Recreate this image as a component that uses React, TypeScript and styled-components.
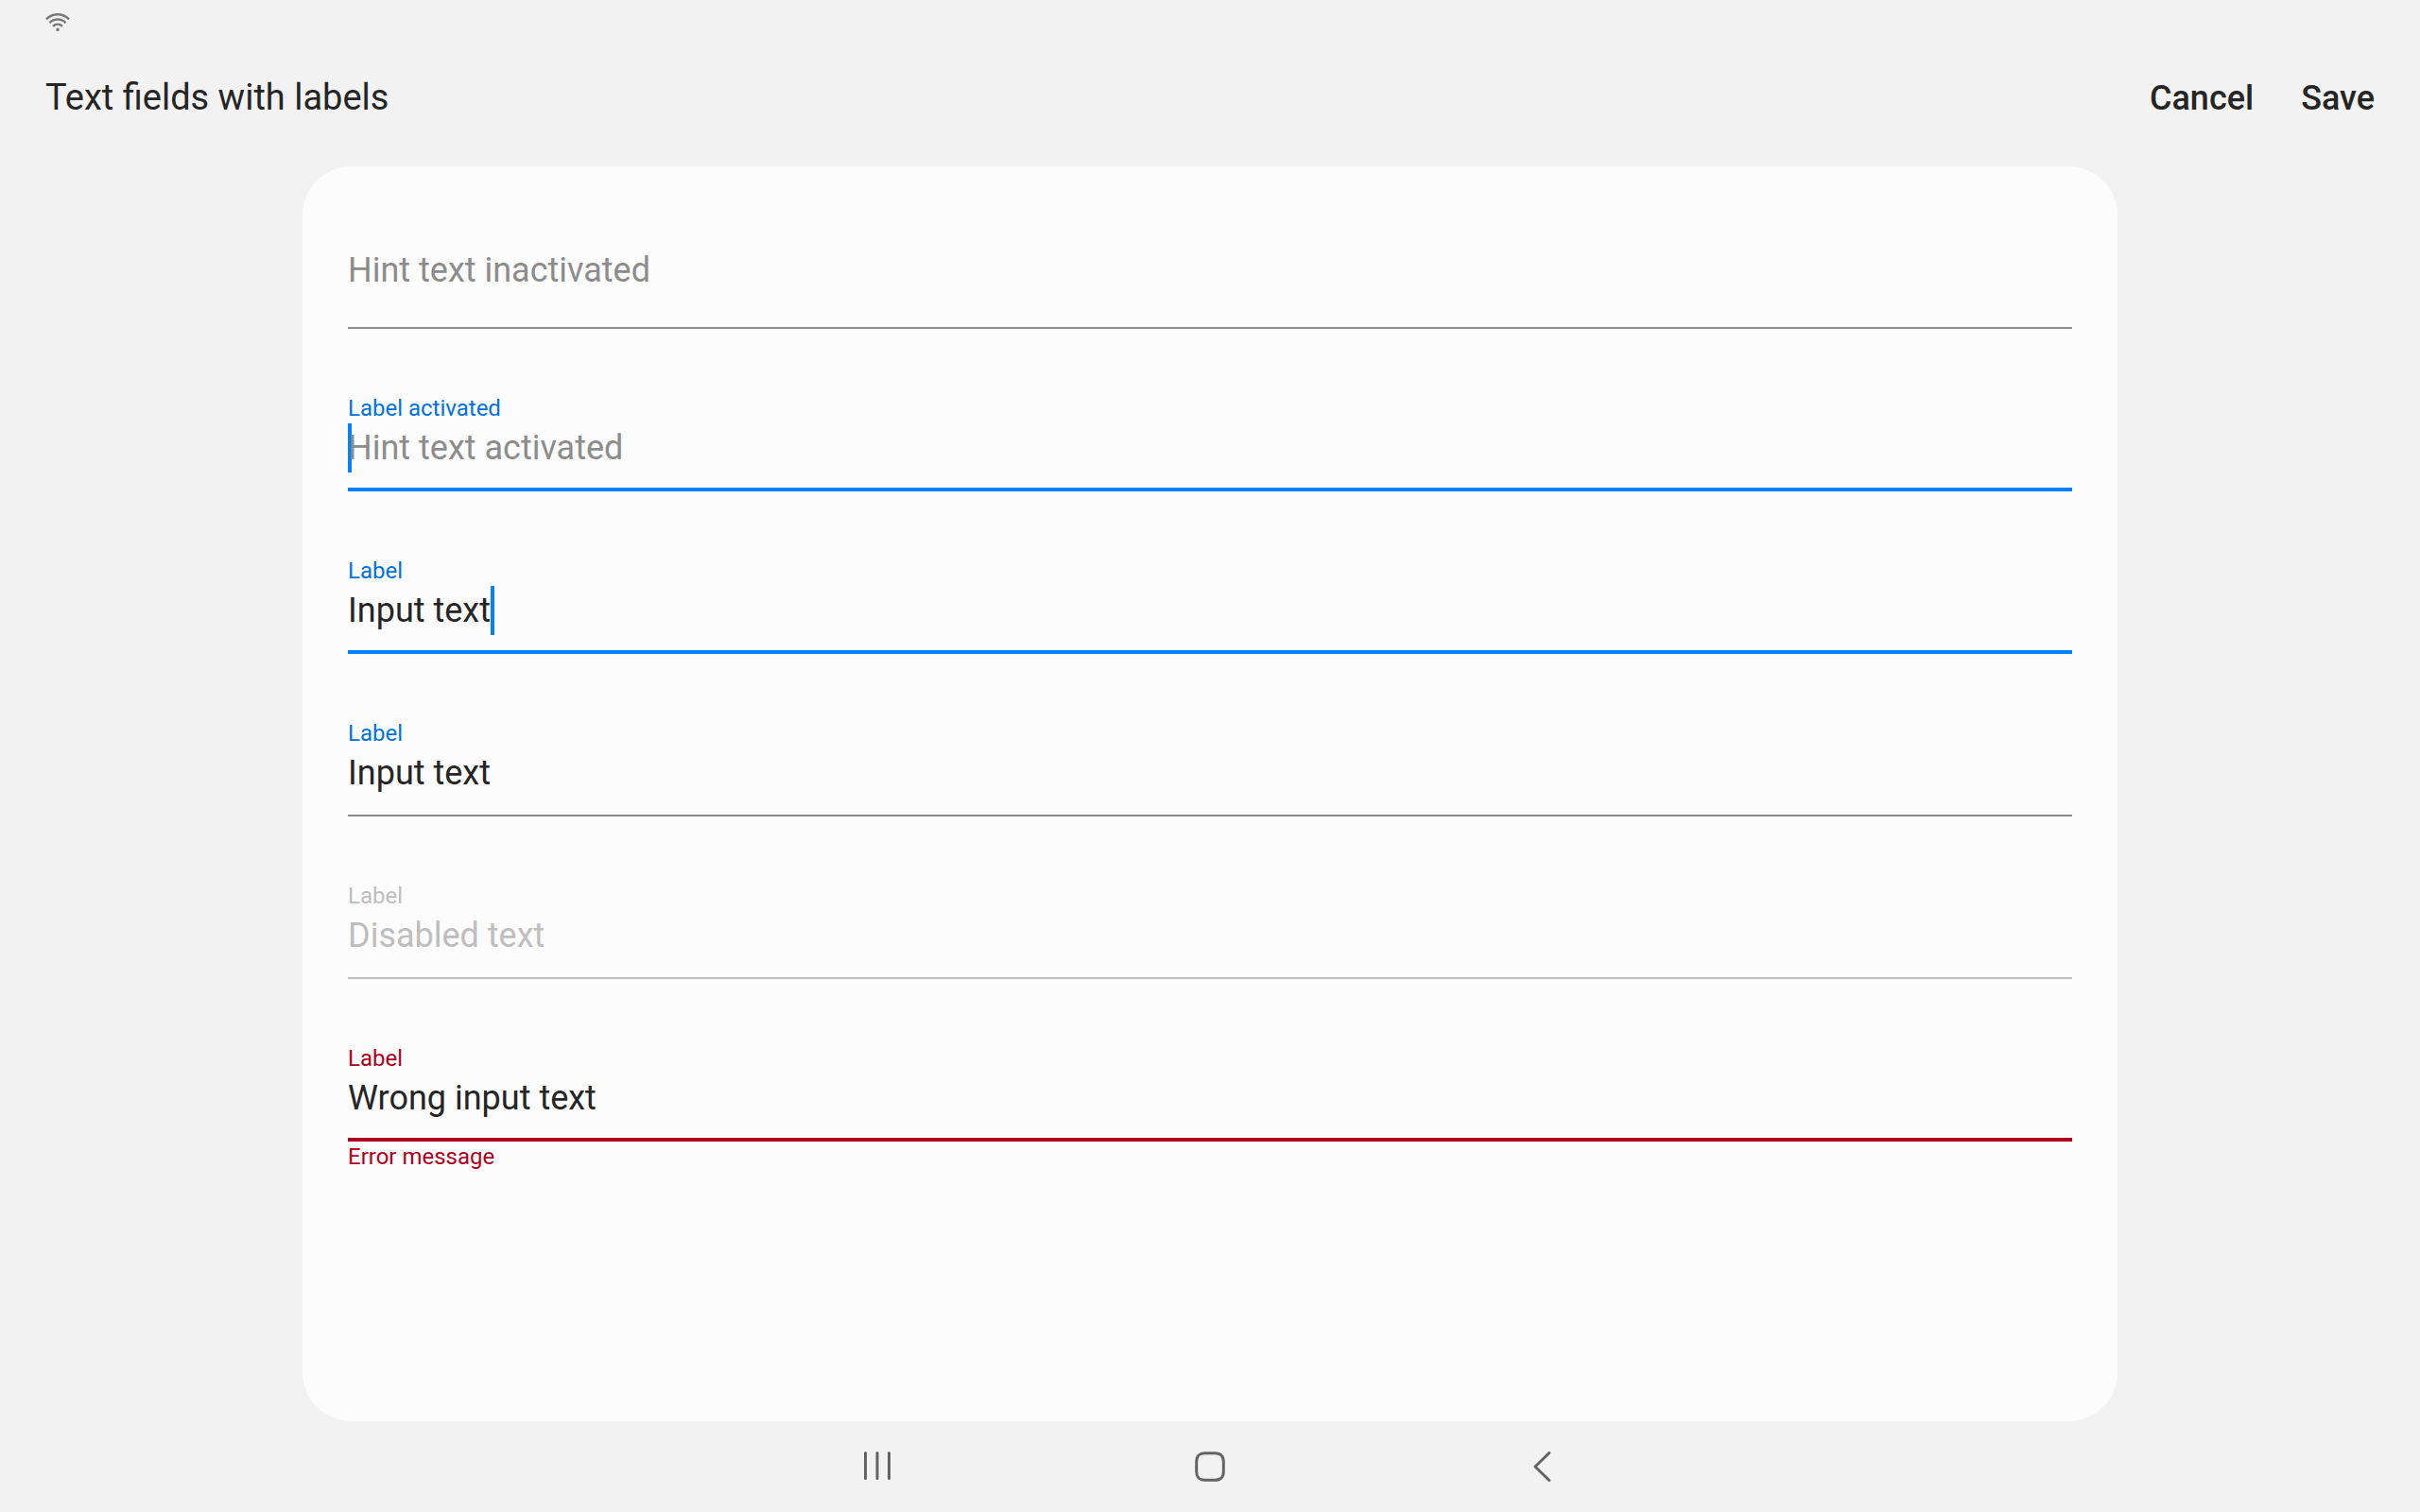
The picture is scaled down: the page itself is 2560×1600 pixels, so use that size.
import React, { useState } from "react";
import styled, { createGlobalStyle, css } from "styled-components";

type FieldState = "idle" | "active" | "disabled" | "error";

const ink = "#252525";
const blue = "#0381fe";
const labelBlue = "#0072de";
const grey = "#8c8c8c";
const faint = "#bebebe";
const red = "#b00020";

const lineColor: Record<FieldState, string> = {
  idle: grey,
  active: blue,
  disabled: faint,
  error: red,
};

const labelColor: Record<FieldState, string> = {
  idle: labelBlue,
  active: labelBlue,
  disabled: faint,
  error: red,
};

const GlobalStyle = createGlobalStyle`
  * {
    box-sizing: border-box;
  }

  body {
    margin: 0;
    background: #f2f2f2;
    color: ${ink};
    font-family: Roboto, "Noto Sans", sans-serif;
  }

  button,
  input {
    font: inherit;
    color: inherit;
  }
`;

const Screen = styled.div`
  min-height: 100vh;
  display: flex;
  flex-direction: column;
`;

const StatusBar = styled.div`
  height: 48px;
  padding: 0 48px;
  display: flex;
  align-items: center;
`;

const AppBar = styled.header`
  height: 128px;
  padding: 29px 48px 0;
  display: flex;
  align-items: baseline;
  justify-content: space-between;
`;

const Title = styled.h1`
  margin: 0;
  font-size: 38px;
  line-height: 52px;
  font-weight: 400;
`;

const Actions = styled.div`
  display: flex;
  gap: 50px;
`;

const TextButton = styled.button`
  padding: 0;
  border: 0;
  background: none;
  font-size: 36px;
  line-height: 52px;
  font-weight: 500;
  cursor: pointer;
`;

const Card = styled.form`
  flex: 1;
  width: 75%;
  margin: 0 auto;
  padding: 68px 48px;
  border-radius: 52px;
  background: #fcfcfc;
  display: flex;
  flex-direction: column;
  gap: 68px;
`;

const Field = styled.div`
  display: flex;
  flex-direction: column;
`;

const FieldLabel = styled.label<{ $state: FieldState }>`
  font-size: 24px;
  line-height: 32px;
  color: ${({ $state }) => labelColor[$state]};
`;

const InputRow = styled.div<{ $state: FieldState; $bare: boolean }>`
  display: flex;
  ${({ $state, $bare }) => {
    const thick = $state === "active" || $state === "error";
    return css`
      padding: ${$bare ? "16px 0 34px" : thick ? "0 0 16px" : "0 0 18px"};
      border-bottom: ${thick ? 4 : 2}px solid ${lineColor[$state]};
    `;
  }}
`;

const TextInput = styled.input<{ $fit: boolean }>`
  height: 52px;
  padding: 0;
  border: 0;
  outline: 0;
  background: none;
  font-size: 36px;
  line-height: 52px;
  caret-color: transparent;
  ${({ $fit }) => ($fit ? "field-sizing: content;" : "flex: 1; min-width: 0;")}

  &::placeholder {
    color: ${grey};
    opacity: 1;
  }

  &:disabled {
    color: ${faint};
  }
`;

const Caret = styled.span<{ $leading: boolean }>`
  flex: none;
  width: 4px;
  height: 52px;
  margin-right: ${({ $leading }) => ($leading ? "-4px" : "0")};
  background: ${blue};
`;

const ErrorText = styled.p`
  margin: 0;
  font-size: 24px;
  line-height: 32px;
  color: ${red};
`;

const NavBar = styled.nav`
  height: 96px;
  display: flex;
  align-items: center;
  justify-content: center;
  gap: 256px;
`;

const NavButton = styled.button`
  width: 96px;
  height: 96px;
  padding: 0;
  border: 0;
  background: none;
  display: flex;
  align-items: center;
  justify-content: center;
  color: #636363;
  cursor: pointer;
`;

interface TextFieldProps {
  id: string;
  state: FieldState;
  label?: string;
  hint?: string;
  initial?: string;
  error?: string;
}

function TextField({ id, state, label, hint, initial = "", error }: TextFieldProps) {
  const [value, setValue] = useState(initial);
  const active = state === "active";
  const empty = value === "";

  return (
    <Field>
      {label && (
        <FieldLabel htmlFor={id} $state={state}>
          {label}
        </FieldLabel>
      )}
      <InputRow $state={state} $bare={!label}>
        {active && empty && <Caret $leading />}
        <TextInput
          id={id}
          type="text"
          value={value}
          placeholder={hint}
          disabled={state === "disabled"}
          aria-label={label ? undefined : hint}
          aria-invalid={state === "error"}
          aria-describedby={error ? `${id}-error` : undefined}
          onChange={(e) => setValue(e.target.value)}
          $fit={active && !empty}
        />
        {active && !empty && <Caret $leading={false} />}
      </InputRow>
      {error && <ErrorText id={`${id}-error`}>{error}</ErrorText>}
    </Field>
  );
}

const WifiIcon = () => (
  <svg width="26" height="20" viewBox="0 0 26 20" fill="none" stroke="#7a7a7a" strokeWidth="2.4" aria-hidden="true">
    <path d="M0.9 6.4C8 -0.4 18 -0.4 25.1 6.4" />
    <path d="M4.4 10.1C9.4 5.2 16.6 5.2 21.6 10.1" />
    <path d="M8 13.8C10.9 11 15.1 11 18 13.8" />
    <circle cx="13" cy="17.4" r="1.8" fill="#7a7a7a" stroke="none" />
  </svg>
);

const RecentsIcon = () => (
  <svg width="32" height="32" viewBox="0 0 32 32" fill="none" stroke="currentColor" strokeWidth="3" strokeLinecap="round" aria-hidden="true">
    <path d="M3.5 1.5V28.5M16 1.5V28.5M28.5 1.5V28.5" />
  </svg>
);

const HomeIcon = () => (
  <svg width="32" height="32" viewBox="0 0 32 32" fill="none" stroke="currentColor" strokeWidth="3" aria-hidden="true">
    <path d="M11 1.7H21C27.5 1.7 30.3 4.5 30.3 11V21C30.3 27.5 27.5 30.3 21 30.3H11C4.5 30.3 1.7 27.5 1.7 21V11C1.7 4.5 4.5 1.7 11 1.7Z" />
  </svg>
);

const BackIcon = () => (
  <svg width="32" height="32" viewBox="0 0 32 32" fill="none" stroke="currentColor" strokeWidth="3" strokeLinecap="round" strokeLinejoin="round" aria-hidden="true">
    <path d="M22.8 1.5L8 16L22.8 30.5" />
  </svg>
);

export default function App() {
  return (
    <>
      <GlobalStyle />
      <Screen>
        <StatusBar>
          <WifiIcon />
        </StatusBar>
        <AppBar>
          <Title>Text fields with labels</Title>
          <Actions>
            <TextButton type="button">Cancel</TextButton>
            <TextButton type="submit" form="text-fields">
              Save
            </TextButton>
          </Actions>
        </AppBar>
        <Card id="text-fields" onSubmit={(e) => e.preventDefault()}>
          <TextField id="inactive" state="idle" hint="Hint text inactivated" />
          <TextField id="active" state="active" label="Label activated" hint="Hint text activated" />
          <TextField id="typing" state="active" label="Label" initial="Input text" />
          <TextField id="filled" state="idle" label="Label" initial="Input text" />
          <TextField id="disabled" state="disabled" label="Label" initial="Disabled text" />
          <TextField id="wrong" state="error" label="Label" initial="Wrong input text" error="Error message" />
        </Card>
        <NavBar>
          <NavButton type="button" aria-label="Recents">
            <RecentsIcon />
          </NavButton>
          <NavButton type="button" aria-label="Home">
            <HomeIcon />
          </NavButton>
          <NavButton type="button" aria-label="Back">
            <BackIcon />
          </NavButton>
        </NavBar>
      </Screen>
    </>
  );
}
